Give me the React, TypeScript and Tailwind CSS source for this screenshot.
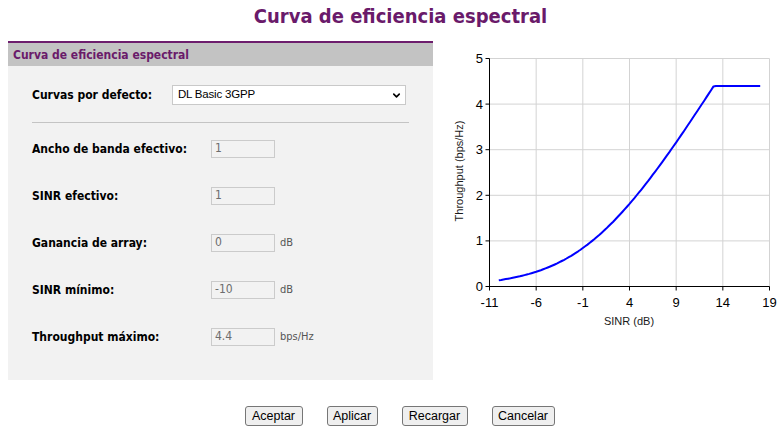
import { ChevronDown } from "lucide-react";

const fields = [
  { label: "Ancho de banda efectivo:", value: "1", unit: "" },
  { label: "SINR efectivo:", value: "1", unit: "" },
  { label: "Ganancia de array:", value: "0", unit: "dB" },
  { label: "SINR mínimo:", value: "-10", unit: "dB" },
  { label: "Throughput máximo:", value: "4.4", unit: "bps/Hz" },
];

const buttons = [
  { text: "Aceptar", w: "w-[58px]" },
  { text: "Aplicar", w: "w-[51px]" },
  { text: "Recargar", w: "w-[66px]" },
  { text: "Cancelar", w: "w-[63px]" },
];

// plot area in svg coords
const X0 = 49.5;
const X1 = 329.5;
const Y0 = 245.5;
const Y1 = 17.5;
const sx = (v: number) => X0 + ((v + 11) / 30) * (X1 - X0);
const sy = (v: number) => Y0 - (v / 5) * (Y0 - Y1);

function curvePath() {
  const pts: string[] = [];
  for (let x = -10; x <= 18.0001; x += 0.25) {
    const t = Math.min(4.4, Math.log2(1 + Math.pow(10, x / 10)));
    pts.push(`${sx(x).toFixed(1)},${sy(t).toFixed(1)}`);
  }
  return "M" + pts.join(" L");
}

function Chart() {
  const xticks = [-11, -6, -1, 4, 9, 14, 19];
  const yticks = [0, 1, 2, 3, 4, 5];
  return (
    <svg width="342" height="300" className="shrink-0 ml-[7px]">
      {xticks.slice(1).map((v) => (
        <line key={"gx" + v} x1={sx(v)} x2={sx(v)} y1={Y1} y2={Y0} stroke="#d3d3d3" />
      ))}
      {yticks.slice(1).map((v) => (
        <line key={"gy" + v} x1={X0} x2={X1} y1={sy(v)} y2={sy(v)} stroke="#d3d3d3" />
      ))}
      <line x1={X0} x2={X0} y1={Y1} y2={Y0 + 0.5} stroke="#000" />
      <line x1={X0} x2={X1} y1={Y0} y2={Y0} stroke="#000" />
      {yticks.map((v) => (
        <g key={"ty" + v}>
          <line x1={X0 - 4} x2={X0} y1={sy(v)} y2={sy(v)} stroke="#000" />
          <text x={43} y={sy(v) + 4.5} textAnchor="end" fontSize="13" fontFamily="Liberation Sans, Arial, sans-serif" fill="#000">
            {v}
          </text>
        </g>
      ))}
      {xticks.map((v) => (
        <g key={"tx" + v}>
          <line x1={sx(v)} x2={sx(v)} y1={Y0} y2={Y0 + 4} stroke="#000" />
          <text x={sx(v)} y={266} textAnchor="middle" fontSize="13" fontFamily="Liberation Sans, Arial, sans-serif" fill="#000">
            {v}
          </text>
        </g>
      ))}
      <path d={curvePath()} fill="none" stroke="#0000ff" strokeWidth="2" strokeLinejoin="round" />
      <text x={189} y={284} textAnchor="middle" fontSize="11" fontFamily="Liberation Sans, Arial, sans-serif" fill="#1a1a1a">
        SINR (dB)
      </text>
      <text
        transform="translate(23,130) rotate(-90)"
        textAnchor="middle"
        fontSize="11"
        fontFamily="Liberation Sans, Arial, sans-serif"
        fill="#1a1a1a"
      >
        Throughput (bps/Hz)
      </text>
    </svg>
  );
}

export default function App() {
  return (
    <div className="w-[782px] h-[434px] bg-white font-['DejaVu_Sans_Condensed','DejaVu_Sans',sans-serif] text-black overflow-hidden">
      <div className="h-[41px] pl-[19px] flex justify-center">
        <h1 className="text-[20px] leading-[32px] font-bold text-[#6a1a6a]">Curva de eficiencia espectral</h1>
      </div>

      <div className="flex pl-[8px]">
        <div className="w-[425px] shrink-0 border-t-2 border-[#6d1d6d]">
          <div className="h-[23px] bg-[#c3c3c3] pl-[5px] flex items-center">
            <span className="text-[12px] font-bold text-[#6a1a6a]">Curva de eficiencia espectral</span>
          </div>
          <div className="h-[314px] bg-[#f2f2f2] pl-[24px] pt-[19px]">
            <div className="flex items-center">
              <span className="w-[140px] text-[12px] font-bold">Curvas por defecto:</span>
              <div className="w-[234px] h-[20px] bg-white border border-[#c9c9c9] flex items-center justify-between pl-[5px] pr-[3px]">
                <span className="font-['Liberation_Sans',Arial,sans-serif] text-[11.5px] tracking-[-0.2px]">DL Basic 3GPP</span>
                <ChevronDown className="w-[11px] h-[11px]" strokeWidth={3.5} />
              </div>
            </div>
            <div className="mt-[17px] w-[377px] h-px bg-[#c4c4c4]" />
            <div className="mt-[17px] flex flex-col gap-[29px]">
              {fields.map((f) => (
                <div key={f.label} className="flex items-center h-[18px]">
                  <span className="w-[179px] text-[12px] font-bold">{f.label}</span>
                  <div className="w-[64px] h-[18px] border border-[#cbcbcb] bg-[#f2f2f2] pl-[3px] flex items-center">
                    <span className="text-[12px] text-[#6d6d6d] leading-none -mt-[2px]">{f.value}</span>
                  </div>
                  {f.unit && <span className="ml-[5px] text-[11px] text-[#555]">{f.unit}</span>}
                </div>
              ))}
            </div>
          </div>
        </div>
        <Chart />
      </div>

      <div className="mt-[26px] pl-[17px] flex justify-center">
        <div className="flex gap-[24px]">
          {buttons.map((b) => (
            <button
              key={b.text}
              className={`${b.w} h-[20px] border border-[#767676] rounded-[3px] bg-[#efefef] font-['Liberation_Sans',Arial,sans-serif] text-[12.5px] text-black leading-none`}
            >
              {b.text}
            </button>
          ))}
        </div>
      </div>
    </div>
  );
}
